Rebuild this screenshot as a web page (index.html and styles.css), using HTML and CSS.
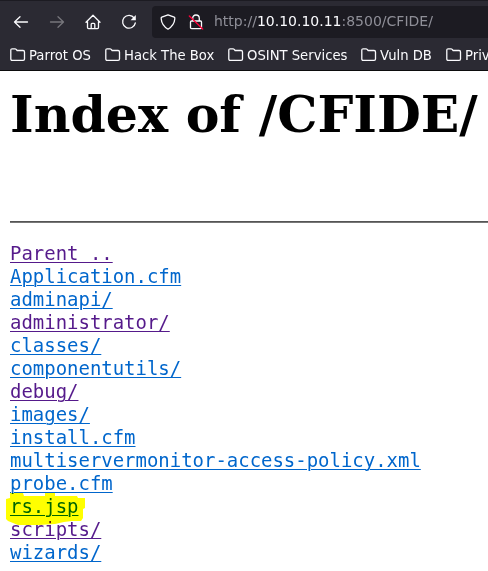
FILE: index.html
```html
<!DOCTYPE html>
<html lang="en">
<head>
<meta charset="utf-8">
<title>Index of /CFIDE/</title>
<link rel="stylesheet" href="styles.css">
</head>
<body>
<svg width="0" height="0" class="defs"><symbol id="folder" viewBox="0 0 16 14"><path d="M.8 11V2.2Q.8.8 2.2.8H5Q5.7.8 6.2 1.4L7.1 2.5H13.1Q14.5 2.5 14.5 3.9V11Q14.5 12.4 13.1 12.4H2.2Q.8 12.4.8 11Z"/></symbol></svg>
<header class="chrome">
  <nav class="toolbar">
    <svg class="icon" viewBox="0 0 16 16"><path d="M14.5 8H1.5M7 2.7 1.5 8 7 13.3"/></svg>
    <svg class="icon disabled" viewBox="0 0 16 16"><path d="M1.5 8H14.5M9 2.7 14.5 8 9 13.3"/></svg>
    <svg class="icon" viewBox="0 0 16 16"><path d="M1 8.3 8 1.3 15 8.3M2.5 7.5V13.5Q2.5 14.6 3.6 14.6H12.4Q13.5 14.6 13.5 13.5V7.5M6.2 14.5V10.2Q6.2 9.3 7 9.3H9Q9.8 9.3 9.8 10.2V14.5"/></svg>
    <svg class="icon" viewBox="0 0 16 16"><path d="M13.2 4A6.4 6.4 0 1 0 14.3 9"/><path class="solid" d="M14.8 1V6.2H9.6Z"/></svg>
    <div class="urlbar">
      <svg class="icon shield" viewBox="0 0 16 16"><path d="M8 .8 14.2 3.2Q15 3.6 14.8 4.7C14.5 9.5 12.3 12.5 8 15.2C3.7 12.5 1.5 9.5 1.2 4.7Q1 3.6 1.8 3.2Z"/></svg>
      <svg class="icon lock" viewBox="0 0 16 16"><path d="M4.7 7V4.5Q4.7 1 8 1T11.3 4.5V7M3.5 7H12.5Q13.5 7 13.5 8V13.4Q13.5 14.6 12.3 14.6H3.7Q2.5 14.6 2.5 13.4V8Q2.5 7 3.5 7Z"/><path class="slash" d="M1.3 2 14.7 15"/></svg>
      <span class="url">http://<b>10.10.10.11</b>:8500/CFIDE/</span>
    </div>
  </nav>
  <nav class="bookmarks">
    <span class="bookmark b1"><svg><use href="#folder"/></svg>Parrot OS</span>
    <span class="bookmark b2"><svg><use href="#folder"/></svg>Hack The Box</span>
    <span class="bookmark b3"><svg><use href="#folder"/></svg>OSINT Services</span>
    <span class="bookmark b4"><svg><use href="#folder"/></svg>Vuln DB</span>
    <span class="bookmark"><svg><use href="#folder"/></svg>Priv</span>
  </nav>
</header>
<main>
  <h1>Index of /CFIDE/</h1>
  <hr>
  <div class="listing">
    <a class="visited">Parent ..</a>
    <a>Application.cfm</a>
    <a>adminapi/</a>
    <a class="visited">administrator/</a>
    <a>classes/</a>
    <a>componentutils/</a>
    <a class="visited">debug/</a>
    <a>images/</a>
    <a>install.cfm</a>
    <a>multiservermonitor-access-policy.xml</a>
    <a>probe.cfm</a>
    <a class="marked">rs.jsp<svg class="marker" viewBox="0 0 80 33"><path d="M4 0H17L18 3H39V0H49V3H71L72 5H79V15L77 16V25L75 28H66L58 29L49 31L33 32H12L2 28L0 26V6L4 5Z"/></svg></a>
    <a class="visited">scripts/</a>
    <a>wizards/</a>
  </div>
</main>
</body>
</html>
```
FILE: styles.css
```css
* { box-sizing: border-box; }
body { margin: 0; background: #fff; overflow: hidden; }
.defs { position: absolute; }
.chrome {
  height: 71px;
  background: #2b2a33;
  border-top: 1px solid #1c1b22;
  border-bottom: 1px solid #0c0c0d;
  color: #fbfbfe;
  font-family: "DejaVu Sans", sans-serif;
  font-size: 13.2px;
}
.toolbar { display: flex; align-items: center; height: 40px; padding: 1px 0 0 13px; gap: 20px; }
svg { fill: none; stroke: #fbfbfe; stroke-width: 1.3; stroke-linecap: round; stroke-linejoin: round; }
.icon { width: 16px; height: 16px; flex: none; }
.disabled { stroke: #77767c; }
.solid { fill: #fbfbfe; stroke: none; }
.slash { stroke: #ff0039; }
.urlbar {
  display: flex;
  align-items: center;
  flex: 1;
  height: 32px;
  margin-left: -5px;
  padding-left: 8px;
  background: #1c1b22;
  border-radius: 4px 0 0 4px;
}
.lock { margin-left: 12px; }
.url { margin-left: 10px; color: #8f8f98; white-space: nowrap; font-size: 14px; line-height: 16px; padding-bottom: 1px; }
.url b { font-weight: normal; color: #fbfbfe; }
.bookmarks { display: flex; height: 28px; padding-left: 10px; }
.bookmark { display: flex; align-items: center; flex: none; gap: 3px; white-space: nowrap; }
.bookmark svg { width: 16px; height: 14px; flex: none; }
.b1 { width: 95px; }
.b2 { width: 123px; }
.b3 { width: 133px; }
.b4 { width: 85px; }
main { padding-left: 10px; }
h1 { margin: 15px 0 0; font: bold 50.55px/58px "DejaVu Serif", serif; white-space: nowrap; }
hr { height: 2px; margin: 77px 0 0; border: 0; background: #777; border-top: 1px solid #555; }
.listing { display: flex; flex-direction: column; align-items: flex-start; margin-top: 19px; font: 18.97px/23px "DejaVu Sans Mono", monospace; }
a { color: #0066cc; text-decoration: underline; text-decoration-thickness: 1px; text-underline-offset: 2px; white-space: pre; }
.visited { color: #551a8b; }
.marked { position: relative; color: #0066cc; }
.marker { position: absolute; left: -4px; top: -2px; width: 80px; height: 33px; fill: #ff0; stroke: none; mix-blend-mode: multiply; }
```
